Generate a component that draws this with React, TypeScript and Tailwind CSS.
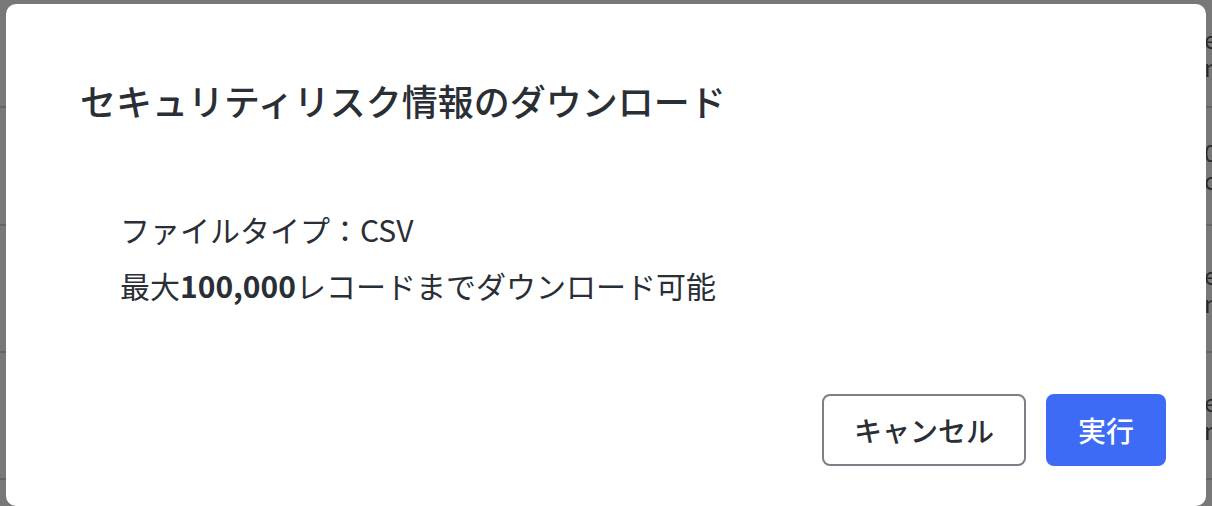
import React from 'react'

// rows of the list page that sits behind the modal (only the right edge peeks out)
const rows = [
  { h: 108, a: 'en', b: 'nt' },
  { h: 118, a: '0', b: 'c' },
  { h: 127, a: 'en', b: 'nt' },
  { h: 127, a: 'en', b: 'nt' },
]

export default function App() {
  return (
    <div
      className="relative h-[506px] w-[1212px] overflow-hidden bg-white"
      style={{ fontFamily: '"Noto Sans CJK JP", "Noto Sans", sans-serif' }}
    >
      {/* page behind */}
      <div className="flex flex-col">
        {rows.map((r, i) => (
          <div
            key={i}
            className="flex flex-col justify-center gap-[2px] border-b-2 border-[#d4d4d4] pl-[1204px] text-[24px] leading-[26px] text-[#5a5a5a]"
            style={{ height: r.h }}
          >
            <span>{r.a}</span>
            <span>{r.b}</span>
          </div>
        ))}
      </div>

      {/* overlay + dialog */}
      <div className="absolute inset-0 bg-black/[0.53] pl-[6px] pt-[4px]">
        <div className="flex h-[502px] w-[1200px] flex-col rounded-[10px] bg-white">
          <h2 className="pl-[74px] pt-[69px] text-[36px] font-medium leading-[54px] text-[#2a2e35]">
            セキュリティリスク情報のダウンロード
          </h2>
          <div className="mt-[74px] pl-[114px] text-[30px] leading-[56px] text-[#2a2e35]">
            <p>ファイルタイプ：CSV</p>
            <p>
              最大<span className="font-bold">100,000</span>レコードまでダウンロード可能
            </p>
          </div>
          <div className="mt-auto flex justify-end gap-[20px] pb-[40px] pr-[40px]">
            <button className="h-[72px] w-[204px] rounded-[8px] border-2 border-[#7c7f87] bg-white text-[28px] font-medium text-[#2a2e35]">
              キャンセル
            </button>
            <button className="h-[72px] w-[120px] rounded-[8px] bg-[#3d6bf6] text-[28px] font-medium text-white">
              実行
            </button>
          </div>
        </div>
      </div>
    </div>
  )
}
